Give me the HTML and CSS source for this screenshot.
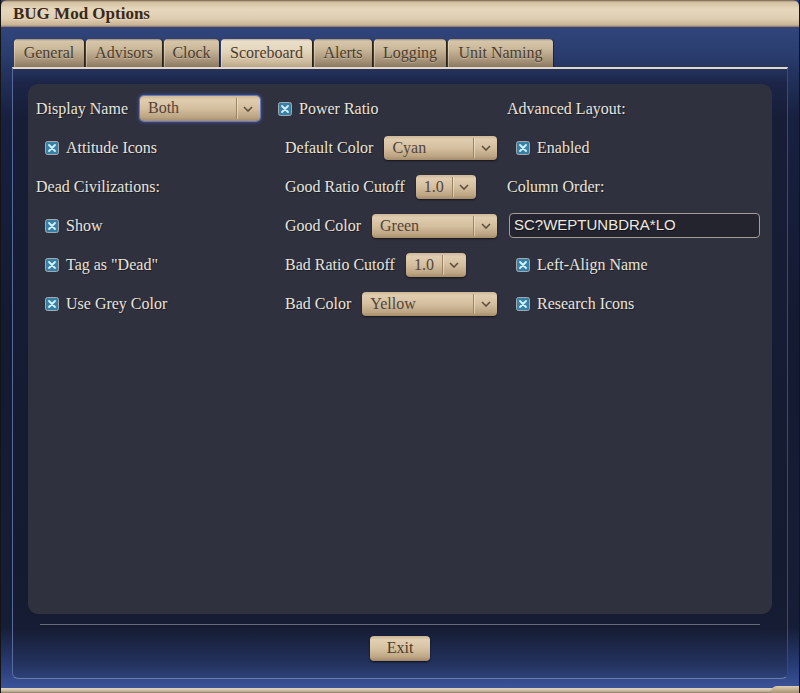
FILE: index.html
```html
<!DOCTYPE html>
<html>
<head>
<meta charset="utf-8">
<title>BUG Mod Options</title>
<link rel="stylesheet" href="styles.css">
</head>
<body>
<div class="window">
  <div class="titlebar">BUG Mod Options</div>
  <div class="frame">
    <div class="tabs">
      <div class="tab t-general">General</div>
      <div class="tab t-advisors">Advisors</div>
      <div class="tab t-clock">Clock</div>
      <div class="tab t-score active">Scoreboard</div>
      <div class="tab t-alerts">Alerts</div>
      <div class="tab t-logging">Logging</div>
      <div class="tab t-unit">Unit Naming</div>
    </div>
    <div class="inner">
      <div class="panel">
        <!-- row 1 -->
        <div class="cell c1 lead"><span class="label">Display Name</span>
          <div class="select focus w120"><span class="val">Both</span><span class="arrow"><svg viewBox="0 0 10 6" width="10" height="6"><path d="M1 1 L5 5 L9 1" fill="none" stroke="#5e4e3c" stroke-width="1.6"/></svg></span></div>
        </div>
        <div class="cell c2 flush"><span class="cb"><svg viewBox="0 0 14 14" width="14" height="14"><rect x="0.5" y="0.5" width="13" height="13" rx="2" fill="#3a80a4" stroke="#a2a9b2"/><path d="M4 4 L10 10 M10 4 L4 10" stroke="#d2f2ff" stroke-width="1.8" stroke-linecap="round"/></svg></span><span class="label">Power Ratio</span></div>
        <div class="cell c3"><span class="label">Advanced Layout:</span></div>
        <!-- row 2 -->
        <div class="cell c1 ind"><span class="cb"><svg viewBox="0 0 14 14" width="14" height="14"><rect x="0.5" y="0.5" width="13" height="13" rx="2" fill="#3a80a4" stroke="#a2a9b2"/><path d="M4 4 L10 10 M10 4 L4 10" stroke="#d2f2ff" stroke-width="1.8" stroke-linecap="round"/></svg></span><span class="label">Attitude Icons</span></div>
        <div class="cell c2"><span class="label">Default Color</span>
          <div class="select grow"><span class="val">Cyan</span><span class="arrow"><svg viewBox="0 0 10 6" width="10" height="6"><path d="M1 1 L5 5 L9 1" fill="none" stroke="#5e4e3c" stroke-width="1.6"/></svg></span></div>
        </div>
        <div class="cell c3 ind"><span class="cb"><svg viewBox="0 0 14 14" width="14" height="14"><rect x="0.5" y="0.5" width="13" height="13" rx="2" fill="#3a80a4" stroke="#a2a9b2"/><path d="M4 4 L10 10 M10 4 L4 10" stroke="#d2f2ff" stroke-width="1.8" stroke-linecap="round"/></svg></span><span class="label">Enabled</span></div>
        <!-- row 3 -->
        <div class="cell c1"><span class="label">Dead Civilizations:</span></div>
        <div class="cell c2"><span class="label">Good Ratio Cutoff</span>
          <div class="select w60"><span class="val">1.0</span><span class="arrow"><svg viewBox="0 0 10 6" width="10" height="6"><path d="M1 1 L5 5 L9 1" fill="none" stroke="#5e4e3c" stroke-width="1.6"/></svg></span></div>
        </div>
        <div class="cell c3"><span class="label">Column Order:</span></div>
        <!-- row 4 -->
        <div class="cell c1 ind"><span class="cb"><svg viewBox="0 0 14 14" width="14" height="14"><rect x="0.5" y="0.5" width="13" height="13" rx="2" fill="#3a80a4" stroke="#a2a9b2"/><path d="M4 4 L10 10 M10 4 L4 10" stroke="#d2f2ff" stroke-width="1.8" stroke-linecap="round"/></svg></span><span class="label">Show</span></div>
        <div class="cell c2"><span class="label">Good Color</span>
          <div class="select grow"><span class="val">Green</span><span class="arrow"><svg viewBox="0 0 10 6" width="10" height="6"><path d="M1 1 L5 5 L9 1" fill="none" stroke="#5e4e3c" stroke-width="1.6"/></svg></span></div>
        </div>
        <div class="cell c3 edit"><div class="input">SC?WEPTUNBDRA*LO</div></div>
        <!-- row 5 -->
        <div class="cell c1 ind"><span class="cb"><svg viewBox="0 0 14 14" width="14" height="14"><rect x="0.5" y="0.5" width="13" height="13" rx="2" fill="#3a80a4" stroke="#a2a9b2"/><path d="M4 4 L10 10 M10 4 L4 10" stroke="#d2f2ff" stroke-width="1.8" stroke-linecap="round"/></svg></span><span class="label">Tag as "Dead"</span></div>
        <div class="cell c2"><span class="label">Bad Ratio Cutoff</span>
          <div class="select w60"><span class="val">1.0</span><span class="arrow"><svg viewBox="0 0 10 6" width="10" height="6"><path d="M1 1 L5 5 L9 1" fill="none" stroke="#5e4e3c" stroke-width="1.6"/></svg></span></div>
        </div>
        <div class="cell c3 ind"><span class="cb"><svg viewBox="0 0 14 14" width="14" height="14"><rect x="0.5" y="0.5" width="13" height="13" rx="2" fill="#3a80a4" stroke="#a2a9b2"/><path d="M4 4 L10 10 M10 4 L4 10" stroke="#d2f2ff" stroke-width="1.8" stroke-linecap="round"/></svg></span><span class="label">Left-Align Name</span></div>
        <!-- row 6 -->
        <div class="cell c1 ind"><span class="cb"><svg viewBox="0 0 14 14" width="14" height="14"><rect x="0.5" y="0.5" width="13" height="13" rx="2" fill="#3a80a4" stroke="#a2a9b2"/><path d="M4 4 L10 10 M10 4 L4 10" stroke="#d2f2ff" stroke-width="1.8" stroke-linecap="round"/></svg></span><span class="label">Use Grey Color</span></div>
        <div class="cell c2"><span class="label">Bad Color</span>
          <div class="select grow"><span class="val">Yellow</span><span class="arrow"><svg viewBox="0 0 10 6" width="10" height="6"><path d="M1 1 L5 5 L9 1" fill="none" stroke="#5e4e3c" stroke-width="1.6"/></svg></span></div>
        </div>
        <div class="cell c3 ind"><span class="cb"><svg viewBox="0 0 14 14" width="14" height="14"><rect x="0.5" y="0.5" width="13" height="13" rx="2" fill="#3a80a4" stroke="#a2a9b2"/><path d="M4 4 L10 10 M10 4 L4 10" stroke="#d2f2ff" stroke-width="1.8" stroke-linecap="round"/></svg></span><span class="label">Research Icons</span></div>
      </div>
      <div class="sep"></div>
      <div class="actions"><div class="btn">Exit</div></div>
    </div>
  </div>
  <div class="strip"></div>
  <div class="grip"></div>
</div>
</body>
</html>
```

FILE: styles.css
```css
html, body {
  margin: 0;
  padding: 0;
  background: #000;
}
.window {
  position: relative;
  width: 800px;
  height: 693px;
  box-sizing: border-box;
  border-left: 1px solid #141414;
  border-right: 1px solid #141414;
  display: flex;
  flex-direction: column;
  font-family: "Liberation Serif", "DejaVu Serif", serif;
  background: #2b3d74;
  overflow: hidden;
}
.titlebar {
  height: 27px;
  box-sizing: border-box;
  padding: 4px 0 0 12px;
  font-size: 17px;
  font-weight: bold;
  color: #3a2818;
  text-shadow: 0 1px 0 rgba(255,240,220,0.4);
  background: linear-gradient(to bottom, #6e5c48 0, #d2c0a2 2px, #e6d7bc 35%, #decdb1 70%, #cab495 92%, #8a765c 100%);
  border-radius: 6px 6px 0 0;
}
.frame {
  flex: 1;
  display: flex;
  flex-direction: column;
  padding: 12px 11px 9px 11px;
  background: linear-gradient(to bottom, #31457c 0, #2b3e70 25px, #23335f 45px, #182040 90px, #141a30 300px, #161d36 600px, #2a3d78 640px, #3a5298 660px);
}
.tabs {
  display: flex;
  gap: 2px;
  margin-left: 2px;
  height: 28px;
}
.tab {
  height: 28px;
  box-sizing: border-box;
  padding-top: 5px;
  text-align: center;
  font-size: 16px;
  color: #4a3c2e;
  text-shadow: 0 1px 0 rgba(255,240,220,0.35);
  border-radius: 4px 4px 0 0;
  background: linear-gradient(to bottom, #9c8a70 0, #d6c6aa 2px, #cbb99b 35%, #a8947a 75%, #8a7860 100%);
  box-shadow: inset 1px 0 0 rgba(255,240,220,0.35), 1px 0 0 #2a2418;
}
.t-general { width: 70px; }
.t-advisors { width: 76px; }
.t-clock { width: 55px; }
.t-score { width: 91px; }
.t-alerts { width: 58px; }
.t-logging { width: 72px; }
.t-unit { width: 105px; }
.tab.active {
  background: linear-gradient(to bottom, #b8a68a 0, #ebdfca 2px, #e4d6be 40%, #cfbd9f 80%, #bba787 100%);
}
.inner {
  flex: 1;
  box-sizing: border-box;
  border-top: 2px solid #e4d8c4;
  border-left: 1px solid #5a6a98;
  border-right: 1px solid #3d4a78;
  border-bottom: 1px solid #6a7cac;
  border-radius: 0 0 6px 6px;
  padding: 15px 15px 0 15px;
  display: flex;
  flex-direction: column;
  background: linear-gradient(to bottom, #24335e 0, #1c2548 14px, #171d36 50px, #141a2f 500px, #161c33 560px, #23325f 595px, #2d4278 609px);
}
.panel {
  height: 530px;
  box-sizing: border-box;
  background: #30313e;
  border-radius: 10px;
  padding: 5px 12px 0 8px;
  display: grid;
  grid-template-columns: 242px 229px 1fr;
  grid-auto-rows: 39px;
  align-content: start;
}
.cell {
  display: flex;
  align-items: center;
  gap: 9px;
  font-size: 16px;
  color: #e8e4dc;
  text-shadow: 1px 1px 0 rgba(0,0,0,0.45);
  white-space: nowrap;
}
.cell.lead { gap: 12px; }
.cell.c2 { padding-left: 7px; padding-right: 10px; gap: 11px; }
.cell.c2.flush { padding-left: 0; gap: 7px; }
.cell.ind { padding-left: 9px; gap: 7px; }
.cell.edit { padding-left: 2px; }
.cb {
  display: inline-flex;
  width: 14px;
  height: 14px;
}
.cb svg { display: block; }
.select {
  height: 24px;
  box-sizing: border-box;
  display: flex;
  align-items: stretch;
  border-radius: 4px;
  background: linear-gradient(to bottom, #cdb898 0, #e0cdb0 15%, #d4bf9f 50%, #bca482 85%, #a48c6c 100%);
  box-shadow: 0 1px 2px rgba(0,0,0,0.6);
  color: #54443a;
  text-shadow: none;
}
.select.focus {
  height: 25px;
  box-shadow: 0 0 0 1px #6a7ab4, 0 0 3px 2px #3a4a88;
}
.select.w120 { width: 120px; }
.select.w60 { width: 60px; }
.select.grow { flex: 1; }
.select .val {
  flex: 1;
  padding: 3px 0 0 8px;
  font-size: 16px;
}
.select .arrow {
  width: 23px;
  display: flex;
  align-items: center;
  justify-content: center;
  border-left: 1px solid #9a8466;
  box-shadow: inset 1px 0 0 rgba(255,245,225,0.45);
  margin: 2px 0;
}
.input {
  flex: 1;
  height: 25px;
  box-sizing: border-box;
  border: 1px solid #a49c96;
  border-radius: 4px;
  background: #24242e;
  padding: 2px 0 0 4px;
  font-family: "Liberation Sans", "DejaVu Sans", sans-serif;
  font-size: 15px;
  color: #ece8e2;
}
.sep {
  height: 1px;
  margin: 10px 12px 0 12px;
  background: #676b80;
  box-shadow: 0 1px 0 rgba(20,24,40,0.8);
}
.actions {
  display: flex;
  justify-content: center;
  margin-top: 11px;
}
.btn {
  width: 60px;
  height: 25px;
  box-sizing: border-box;
  text-align: center;
  padding-top: 3px;
  font-size: 16px;
  color: #4a3a2c;
  border-radius: 4px;
  background: linear-gradient(to bottom, #c8b494 0, #e2d0b4 15%, #d6c2a2 50%, #bea684 85%, #9e8668 100%);
  box-shadow: 0 1px 2px rgba(0,0,0,0.7);
}
.strip {
  height: 5px;
  background: linear-gradient(to bottom, #e2d6c2 0, #c8b89e 60%, #8a7a64 100%);
}
.grip {
  position: absolute;
  right: 0;
  bottom: 0;
  width: 28px;
  height: 7px;
  background: linear-gradient(to bottom, #ddceb2, #a89274);
  border-radius: 6px 0 0 0;
}
```
